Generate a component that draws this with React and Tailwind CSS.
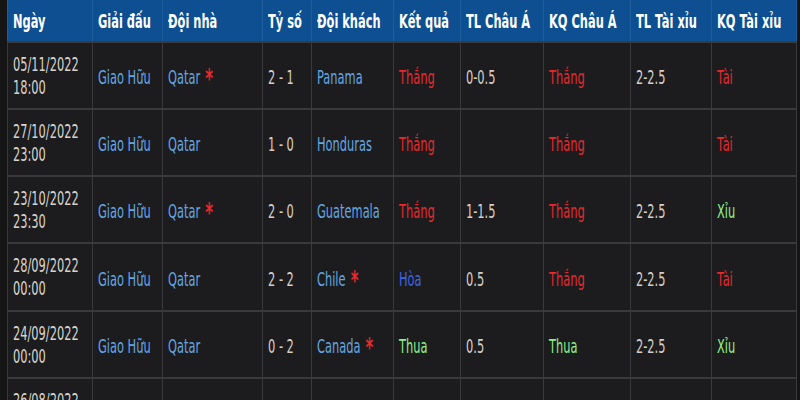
import React from "react";

const cols = [85, 70, 100, 49, 82, 67, 83, 87, 81, 85];
const heads = ["Ngày", "Giải đấu", "Đội nhà", "Tỷ số", "Đội khách", "Kết quả", "TL Châu Á", "KQ Châu Á", "TL Tài xỉu", "KQ Tài xỉu"];

const RED = "text-[#e8282c]";
const GREEN = "text-[#8ef08a]";
const BLUE = "text-[#3f63e6]";

const rows = [
  { d: "05/11/2022", t: "18:00", home: "Qatar", hs: true, score: "2 - 1", away: "Panama", as: false, kq: ["Thắng", RED], tl: "0-0.5", kqa: ["Thắng", RED], tx: "2-2.5", kqt: ["Tài", RED], h: "h-[67px]" },
  { d: "27/10/2022", t: "23:00", home: "Qatar", hs: false, score: "1 - 0", away: "Honduras", as: false, kq: ["Thắng", RED], tl: "", kqa: ["Thắng", RED], tx: "", kqt: ["Tài", RED], h: "h-[67px]" },
  { d: "23/10/2022", t: "23:30", home: "Qatar", hs: true, score: "2 - 0", away: "Guatemala", as: false, kq: ["Thắng", RED], tl: "1-1.5", kqa: ["Thắng", RED], tx: "2-2.5", kqt: ["Xỉu", GREEN], h: "h-[67px]" },
  { d: "28/09/2022", t: "00:00", home: "Qatar", hs: false, score: "2 - 2", away: "Chile", as: true, kq: ["Hòa", BLUE], tl: "0.5", kqa: ["Thắng", RED], tx: "2-2.5", kqt: ["Tài", RED], h: "h-[68px]" },
  { d: "24/09/2022", t: "00:00", home: "Qatar", hs: false, score: "0 - 2", away: "Canada", as: true, kq: ["Thua", GREEN], tl: "0.5", kqa: ["Thua", GREEN], tx: "2-2.5", kqt: ["Xỉu", GREEN], h: "h-[67px]" },
  { d: "26/08/2022", t: "00:00", home: "", hs: false, score: "", away: "", as: false, kq: ["", RED], tl: "", kqa: ["", RED], tx: "", kqt: ["", RED], h: "h-[67px]" },
];

function S({ children, className = "" }) {
  return (
    <span className={"inline-block origin-left scale-x-[0.57] whitespace-nowrap " + className}>{children}</span>
  );
}

function Star() {
  return <span className="text-[#e8282c] font-bold text-[26px] leading-none ml-[9px] relative top-[4px]">*</span>;
}

const td = "border-x border-[#3a3a3c] px-[5px] align-middle overflow-hidden";

export default function App() {
  return (
    <div className="w-[800px] h-[400px] overflow-hidden bg-[#151516] pl-[7px]" style={{ fontFamily: '"DejaVu Sans", "Noto Sans", sans-serif' }}>
      <table className="table-fixed border-collapse w-[789px] text-[20px]">
        <colgroup>
          {cols.map((w, i) => (
            <col key={i} style={{ width: w }} />
          ))}
        </colgroup>
        <thead>
          <tr className="h-[42px] bg-[#0d4f90] border-b-2 border-[#3a3a3c]">
            {heads.map((h, i) => (
              <th key={i} className="border-x border-[#1d5d9c] px-[5px] text-left font-bold text-white leading-none overflow-hidden">
                <S>{h}</S>
              </th>
            ))}
          </tr>
        </thead>
        <tbody className="bg-[#1c1c1e]">
          {rows.map((r, i) => (
            <tr key={i} className={r.h + " border-b-2 border-[#3a3a3c]"}>
              <td className={td + " text-[#d8d3cc] leading-[23px]"}>
                <S>{r.d}<br />{r.t}</S>
              </td>
              <td className={td + " text-[#64a6e2] pt-[3px]"}>
                <S>{i < 5 ? "Giao Hữu" : ""}</S>
              </td>
              <td className={td + " text-[#64a6e2] pt-[3px]"}>
                <S>{r.home}{r.hs && <Star />}</S>
              </td>
              <td className={td + " text-[#d4cfc8] pt-[3px]"}>
                <S>{r.score}</S>
              </td>
              <td className={td + " text-[#64a6e2] pt-[3px]"}>
                <S>{r.away}{r.as && <Star />}</S>
              </td>
              <td className={td + " pt-[3px] " + r.kq[1]}>
                <S>{r.kq[0]}</S>
              </td>
              <td className={td + " text-[#d4cfc8] pt-[3px]"}>
                <S>{r.tl}</S>
              </td>
              <td className={td + " pt-[3px] " + r.kqa[1]}>
                <S>{r.kqa[0]}</S>
              </td>
              <td className={td + " text-[#d4cfc8] pt-[3px]"}>
                <S>{r.tx}</S>
              </td>
              <td className={td + " pt-[3px] " + r.kqt[1]}>
                <S>{r.kqt[0]}</S>
              </td>
            </tr>
          ))}
        </tbody>
      </table>
    </div>
  );
}
